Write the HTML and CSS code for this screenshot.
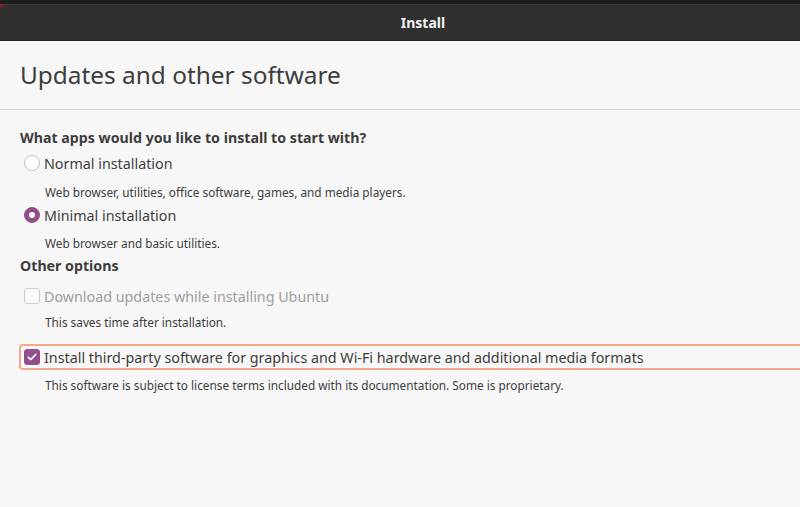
FILE: index.html
```html
<!DOCTYPE html>
<html>
<head>
<meta charset="utf-8">
<title>Install</title>
<link rel="stylesheet" href="styles.css">
</head>
<body>
<div class="window">
  <div class="top-strip"></div>
  <header class="titlebar"><span class="corner"></span><span class="titlebar-text">Install</span></header>
  <main class="content">
    <h1 class="page-title">Updates and other software</h1>
    <div class="separator"></div>
    <section class="options">
      <h2 class="group-title">What apps would you like to install to start with?</h2>
      <div class="option row-normal">
        <span class="radio"></span>
        <span class="label">Normal installation</span>
      </div>
      <p class="desc desc-normal">Web browser, utilities, office software, games, and media players.</p>
      <div class="option row-minimal">
        <span class="radio checked"></span>
        <span class="label">Minimal installation</span>
      </div>
      <p class="desc desc-minimal">Web browser and basic utilities.</p>
      <h2 class="group-title other">Other options</h2>
      <div class="option row-download disabled">
        <span class="check"></span>
        <span class="label">Download updates while installing Ubuntu</span>
      </div>
      <p class="desc desc-download">This saves time after installation.</p>
      <div class="option row-third focused">
        <span class="check checked">
          <svg viewBox="0 0 16 16" width="16" height="16"><path d="M3.6 8.2 L6.6 11 L12.4 5" fill="none" stroke="#ffffff" stroke-width="1.8" stroke-linecap="round" stroke-linejoin="round"/></svg>
        </span>
        <span class="label">Install third-party software for graphics and Wi-Fi hardware and additional media formats</span>
      </div>
      <p class="desc desc-last">This software is subject to license terms included with its documentation. Some is proprietary.</p>
    </section>
  </main>
</div>
</body>
</html>
```
FILE: styles.css
```css
html, body {
  margin: 0;
  padding: 0;
  background: #f7f7f7;
}
body {
  font-family: "Noto Sans", "Open Sans", sans-serif;
  color: #3d3d3d;
  width: 800px;
  height: 507px;
  overflow: hidden;
}
.window {
  display: flex;
  flex-direction: column;
  height: 507px;
}
.top-strip {
  height: 4px;
  background: #1d1d1d;
}
.titlebar {
  position: relative;
  box-sizing: border-box;
  height: 37px;
  background: #303030;
  border-top: 1px solid #3b3b3b;
  border-bottom: 1px solid #1e1e1e;
  display: flex;
  align-items: center;
  justify-content: center;
  padding-left: 46px;
}
.corner {
  position: absolute;
  left: 0;
  top: -1px;
  width: 0;
  height: 0;
  border-top: 4px solid #a5161c;
  border-right: 4px solid transparent;
}
.titlebar-text {
  color: #f2f2f2;
  font-weight: 700;
  font-size: 14px;
}
.content {
  flex: 1;
}
.page-title {
  margin: 18px 0 0 20px;
  font-size: 24.4px;
  font-weight: 400;
  line-height: 32px;
  height: 32px;
  color: #3d3d3d;
}
.separator {
  margin-top: 18px;
  height: 1px;
  background: #dadada;
}
.options {
  padding-left: 20px;
}
.group-title {
  margin: 18px 0 0 0;
  font-size: 14.2px;
  font-weight: 700;
  line-height: 20px;
  color: #3d3d3d;
}
.group-title.other {
  margin-top: 2px;
}
.option {
  display: flex;
  align-items: center;
  height: 22px;
  font-size: 14.3px;
  margin-top: 4px;
}
.row-minimal {
  margin-top: 1px;
}
.row-download {
  margin-top: 9px;
}
.label {
  margin-left: 4px;
  white-space: nowrap;
}
.radio {
  box-sizing: border-box;
  width: 16px;
  height: 16px;
  margin-left: 4px;
  border-radius: 50%;
  border: 1px solid #c2c2c2;
  background: #ffffff;
  display: flex;
  align-items: center;
  justify-content: center;
}
.radio.checked {
  border-color: #924d8b;
  background: #924d8b;
}
.radio.checked::after {
  content: "";
  width: 6px;
  height: 6px;
  border-radius: 50%;
  background: #ffffff;
}
.check {
  box-sizing: border-box;
  width: 16px;
  height: 16px;
  margin-left: 4px;
  border-radius: 3px;
  border: 1px solid #cdcdcd;
  background: #fbfbfb;
  display: flex;
  align-items: center;
  justify-content: center;
}
.check.checked {
  border-color: #924d8b;
  background: #924d8b;
}
.check svg {
  display: block;
}
.disabled .label {
  color: #9e9e9e;
}
.focused {
  box-sizing: border-box;
  height: 26px;
  margin-top: 11px;
  margin-left: -1px;
  margin-right: -10px;
  padding-left: 0;
  border: 2px solid #f3a98c;
  border-radius: 4px;
}
.focused .check {
  margin-left: 3px;
}
.desc {
  margin: 7px 0 0 25px;
  font-size: 11.8px;
  line-height: 22px;
  height: 22px;
  white-space: nowrap;
  color: #3d3d3d;
}
.desc-minimal {
  margin-top: 6px;
}
.desc-download {
  margin-top: 4px;
}
.desc-last {
  margin-top: 4px;
}
```
